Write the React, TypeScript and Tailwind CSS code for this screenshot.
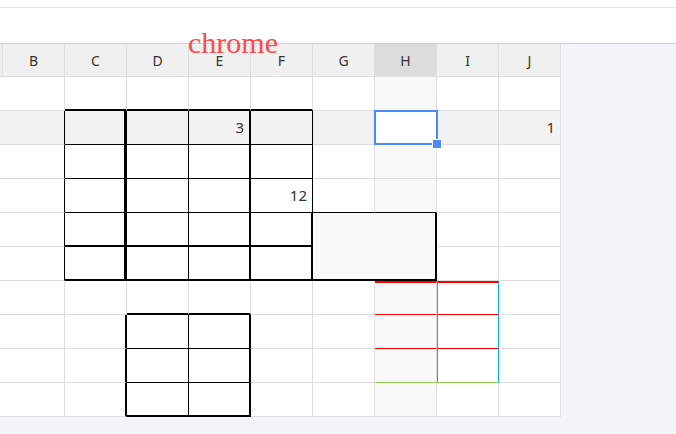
import React from 'react';

const COLS = ['A', 'B', 'C', 'D', 'E', 'F', 'G', 'H', 'I', 'J'];
const ROWS = [1, 2, 3, 4, 5, 6, 7, 8, 9, 10];

type CellSpec = { r?: string; b?: string; t?: string; l?: string; bg?: string; text?: string; span?: boolean; hidden?: boolean };

const RIGHT = 'border-r border-r-[#dedede]';
const BOTTOM = 'border-b border-b-[#dedede]';
const K1R = 'border-r border-r-black';
const K2R = 'border-r-2 border-r-black';
const K3R = 'border-r-[3px] border-r-black';
const K1B = 'border-b border-b-black';
const K2B = 'border-b-2 border-b-black';

// custom borders, merges and values per cell
const specs: Record<string, CellSpec> = {};
const set = (keys: string[], spec: CellSpec) => {
  keys.forEach((key) => {
    specs[key] = { ...specs[key], ...spec };
  });
};
const range = (cols: string, rows: number[]) => rows.flatMap((row) => cols.split('').map((col) => `${col}${row}`));

set(range('CDEF', [1]), { b: K2B });
set(range('B', [2, 3, 4, 5, 6]), { r: K1R });
set(range('C', [2, 3, 4, 5, 6]), { r: K3R });
set(range('D', [2, 3, 4, 5, 6]), { r: K1R });
set(range('E', [2, 3, 4, 5, 6]), { r: K2R });
set(range('F', [2, 3, 4]), { r: K1R });
set(range('F', [5, 6]), { r: K2R });
set(range('CDEF', [2, 3, 4]), { b: K1B });
set(range('CDEF', [5, 6]), { b: K2B });
set(range('GH', [4]), { b: K1B });
set(['G5'], { span: true, r: K2R, b: K2B, bg: 'bg-[#f9f9f9]' });
set(['H5', 'G6', 'H6'], { hidden: true });
set(range('HI', [7]), { t: 'border-t-2 border-t-[#ff0000]' });
set(range('HI', [7, 8]), { b: 'border-b border-b-[#ff0000]' });
set(range('HI', [9]), { b: 'border-b border-b-[#92d050]' });
set(range('I', [7, 8, 9]), { l: 'border-l border-l-[#00b0f0]', r: 'border-r border-r-[#00b0f0]' });
set(range('DE', [7]), { b: K2B });
set(range('C', [8, 9, 10]), { r: K2R });
set(range('D', [8, 9, 10]), { r: K1R });
set(range('E', [8, 9, 10]), { r: K2R });
set(range('DE', [8, 9]), { b: K1B });
set(range('DE', [10]), { b: K2B });
set(['E2'], { text: '3' });
set(['F4'], { text: '12' });
set(['J2'], { text: '1' });

function cellBg(col: string, row: number) {
  if (col === 'H' && row === 2) return 'bg-white';
  if (row === 2) return 'bg-[#f2f2f2]';
  if (col === 'H') return 'bg-[#f9f9f9]';
  return 'bg-white';
}

function Cell({ col, row }: { col: string; row: number }) {
  const spec = specs[`${col}${row}`] ?? {};
  if (spec.hidden) return null;
  return (
    <div
      className={[
        'flex items-center justify-end pr-[5px] text-[15px] text-[#333]',
        spec.r ?? RIGHT,
        spec.b ?? BOTTOM,
        spec.t ?? '',
        spec.l ?? '',
        spec.bg ?? cellBg(col, row),
        spec.span ? 'col-span-2 row-span-2' : '',
      ].join(' ')}
    >
      {spec.text}
    </div>
  );
}

export default function App() {
  return (
    <div className="relative h-[434px] w-[676px] overflow-hidden bg-[#f3f5f8] font-['Noto_Sans','Noto_Sans_CJK_SC',sans-serif]">
      <div className="bg-white">
        <div className="h-[8px] border-b border-[#e3e3e3]" />
        <div className="h-[36px] border-b border-[#d2d2d2]" />
      </div>

      <div className="relative grid w-[561px] grid-cols-[3px_repeat(9,62px)] grid-rows-[33px_repeat(10,34px)]">
        {COLS.map((col) => (
          <div
            key={col}
            className={`flex items-center justify-center border-r border-b border-[#dedede] text-[14px] text-[#333] ${col === 'H' ? 'bg-[#dcdcdc]' : 'bg-[#f0f0f0]'}`}
          >
            {col === 'A' ? '' : col}
          </div>
        ))}
        {ROWS.map((row) => COLS.map((col) => <Cell key={`${col}${row}`} col={col} row={row} />))}

        {/* selection box and fill handle */}
        <div className="absolute left-[374px] top-[66px] h-[35px] w-[64px] border-[2.5px] border-[#4a89ff]" />
        <div className="absolute left-[432px] top-[95px] h-[10px] w-[10px] border border-white bg-[#4a89ff]" />
      </div>

      <div className="absolute left-[188px] top-[28px] font-['Liberation_Serif',serif] text-[30px] leading-none text-[#ff4a4a]">chrome</div>
    </div>
  );
}
